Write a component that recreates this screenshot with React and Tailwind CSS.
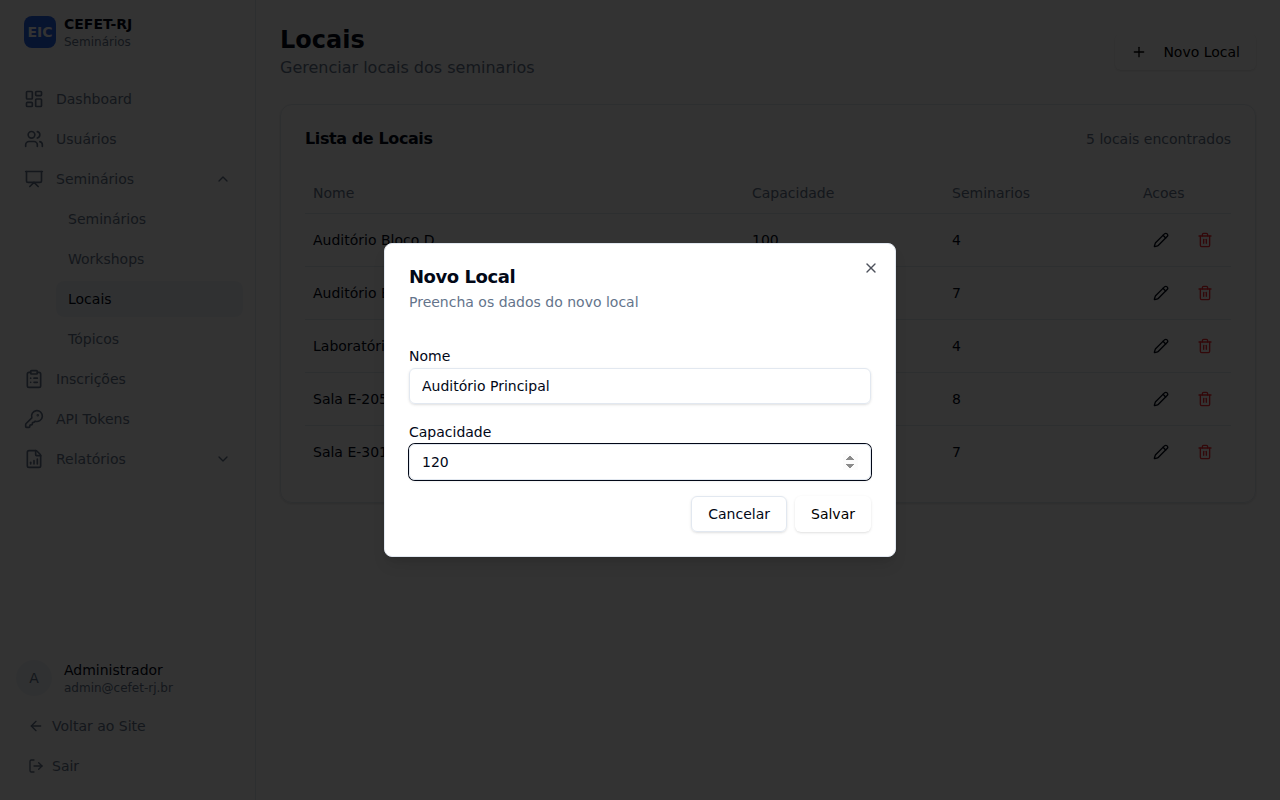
import { LayoutDashboard, Users, Presentation, ClipboardList, KeyRound, FileChartColumnIncreasing, ChevronUp, ChevronDown, ArrowLeft, LogOut, Plus, Pencil, Trash2, X } from "lucide-react";

const rows = [
  ["Auditório Bloco D", 100, 4],
  ["Auditório E", 200, 7],
  ["Laboratório 1", 40, 4],
  ["Sala E-205", 50, 8],
  ["Sala E-301", 60, 7],
];

function NavItem({ icon: Icon, label, chevron: Chevron }) {
  return (
    <div className="flex h-9 items-center gap-3 rounded-lg px-2 text-sm text-[#64748b]">
      <Icon size={20} />
      <span className="flex-1">{label}</span>
      {Chevron && <Chevron size={16} className="mr-1" />}
    </div>
  );
}

function SubItem({ label, active }) {
  return (
    <div className={active ? "flex h-9 items-center rounded-lg bg-[#f1f5f9] px-3 text-sm text-[#020817]" : "flex h-9 items-center px-3 text-sm text-[#64748b]"}>
      {label}
    </div>
  );
}

function Sidebar() {
  return (
    <aside className="flex h-full w-64 shrink-0 flex-col border-r border-[#e2e8f0]">
      <div className="flex h-16 items-center gap-2 px-6">
        <div className="flex size-8 items-center justify-center rounded-lg bg-[#2563eb] text-sm font-bold text-white">EIC</div>
        <div className="flex flex-col pt-0.5">
          <span className="text-sm leading-4 font-bold">CEFET-RJ</span>
          <span className="mt-0.5 text-xs text-[#64748b]">Seminários</span>
        </div>
      </div>
      <nav className="mt-[17px] flex flex-1 flex-col gap-1 pr-3 pl-4">
        <NavItem icon={LayoutDashboard} label="Dashboard" />
        <NavItem icon={Users} label="Usuários" />
        <NavItem icon={Presentation} label="Seminários" chevron={ChevronUp} />
        <div className="ml-10 flex flex-col gap-1">
          <SubItem label="Seminários" />
          <SubItem label="Workshops" />
          <SubItem label="Locais" active />
          <SubItem label="Tópicos" />
        </div>
        <NavItem icon={ClipboardList} label="Inscrições" />
        <NavItem icon={KeyRound} label="API Tokens" />
        <NavItem icon={FileChartColumnIncreasing} label="Relatórios" chevron={ChevronDown} />
      </nav>
      <div className="flex flex-col px-4 pb-4 text-sm text-[#64748b]">
        <div className="mb-3 flex items-center gap-3">
          <div className="flex size-9 items-center justify-center rounded-full bg-[#f1f5f9]">A</div>
          <div className="flex flex-col">
            <span className="leading-5 text-[#020817]">Administrador</span>
            <span className="text-xs">admin@cefet-rj.br</span>
          </div>
        </div>
        <div className="mb-1 flex h-9 items-center gap-2 px-3"><ArrowLeft size={16} />Voltar ao Site</div>
        <div className="flex h-9 items-center gap-2 px-3"><LogOut size={16} />Sair</div>
      </div>
    </aside>
  );
}

function Main() {
  return (
    <main className="flex flex-1 flex-col p-6">
      <div className="flex items-center justify-between">
        <div>
          <h1 className="text-2xl font-bold">Locais</h1>
          <p className="text-base text-[#64748b]">Gerenciar locais dos seminarios</p>
        </div>
        <button className="flex h-9 items-center rounded-md px-4 text-sm text-black shadow-sm">
          <Plus size={16} className="mr-4" />Novo Local
        </button>
      </div>
      <section className="mt-6 rounded-xl border border-[#e2e8f0] px-6 pt-6 pb-6 shadow-sm">
        <div className="flex h-5 items-center justify-between">
          <h2 className="font-semibold tracking-tight">Lista de Locais</h2>
          <span className="text-sm text-[#64748b]">5 locais encontrados</span>
        </div>
        <table className="mt-6 w-full table-fixed text-left text-sm">
          <colgroup><col className="w-[439px]" /><col className="w-[200px]" /><col className="w-[191px]" /><col /></colgroup>
          <thead>
            <tr className="h-10 border-b border-[#e2e8f0] text-[#64748b]">
              {["Nome", "Capacidade", "Seminarios", "Acoes"].map((h) => <th key={h} className="px-2 font-normal">{h}</th>)}
            </tr>
          </thead>
          <tbody>
            {rows.map(([name, cap, sem], i) => (
              <tr key={name} className={i < 4 ? "h-[53px] border-b border-[#e2e8f0]" : "h-[53px]"}>
                <td className="px-2">{name}</td>
                <td className="px-2">{cap}</td>
                <td className="px-2">{sem}</td>
                <td className="px-2">
                  <div className="flex gap-7 pl-2.5"><Pencil size={16} /><Trash2 size={16} className="text-red-500" /></div>
                </td>
              </tr>
            ))}
          </tbody>
        </table>
      </section>
    </main>
  );
}

function Dialog() {
  return (
    <div className="relative flex w-[512px] flex-col rounded-lg border border-[#e2e8f0] bg-white p-6 shadow-lg">
      <h2 className="text-lg leading-[18px] font-semibold tracking-tight">Novo Local</h2>
      <p className="mt-1.5 text-sm text-[#64748b]">Preencha os dados do novo local</p>
      <X size={16} className="absolute top-4 right-4 opacity-70" />
      <label className="mt-[34px] mb-0.5 text-sm">Nome</label>
      <input type="text" defaultValue="Auditório Principal" className="h-9 rounded-md border border-[#e2e8f0] px-3 text-sm shadow-sm outline-none" />
      <label className="mt-[18px] mb-0.5 text-sm">Capacidade</label>
      <input type="number" autoFocus defaultValue="120" className="h-9 rounded-md border border-[#e2e8f0] px-3 text-sm caret-transparent shadow-sm ring-1 ring-[#020817] outline-none" />
      <div className="mt-4 flex justify-end gap-2 text-sm">
        <button className="h-9 rounded-md border border-[#e2e8f0] px-4 shadow-sm">Cancelar</button>
        <button className="h-9 rounded-md px-4 text-black shadow-sm">Salvar</button>
      </div>
    </div>
  );
}

export default function App() {
  return (
    <div className="relative h-[800px] w-[1280px] overflow-hidden bg-white font-['DejaVu_Sans',sans-serif] text-[#020817]">
      <div className="flex h-full">
        <Sidebar />
        <Main />
      </div>
      <div className="absolute inset-0 flex items-center justify-center bg-black/80">
        <Dialog />
      </div>
    </div>
  );
}
